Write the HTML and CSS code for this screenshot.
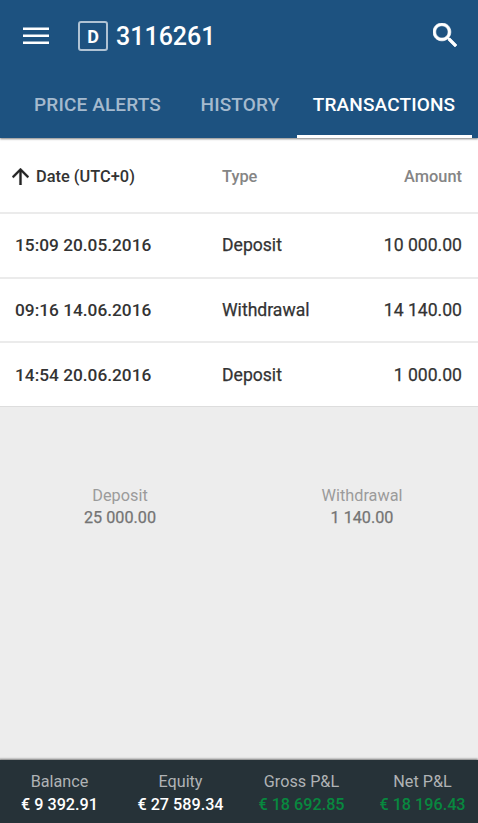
FILE: index.html
```html
<!DOCTYPE html>
<html lang="en">
<head>
<meta charset="utf-8">
<title>Transactions</title>
<link rel="stylesheet" href="styles.css">
</head>
<body>
<div class="app">
  <header class="header">
    <div class="toolbar">
      <svg class="menu" viewBox="0 0 26 18"><path d="M0 .5h26v2.6H0zM0 7.5h26v2.6H0zM0 14.5h26v2.6H0z"/></svg>
      <span class="badge">D</span>
      <h1 class="account">3116261</h1>
      <svg class="search" viewBox="3 3 17.5 17.5"><path d="M15.5 14h-.79l-.28-.27C15.41 12.59 16 11.11 16 9.5 16 5.91 13.09 3 9.5 3S3 5.91 3 9.5 5.91 16 9.5 16c1.61 0 3.09-.59 4.23-1.57l.27.28v.79l5 4.99L20.49 19l-4.99-5zm-6 0C7.01 14 5 11.99 5 9.5S7.01 5 9.5 5 14 7.01 14 9.5 11.99 14 9.5 14z"/></svg>
    </div>
    <nav class="tabs">
      <span class="tab alerts"><span class="label">PRICE ALERTS</span></span>
      <span class="tab history"><span class="label">HISTORY</span></span>
      <span class="tab transactions"><span class="label">TRANSACTIONS</span></span>
    </nav>
  </header>
  <main class="list">
    <div class="row head">
      <span class="date"><svg class="arrow" viewBox="4 4 16 16"><path d="M4 12l1.41 1.41L11 7.83V20h2V7.83l5.58 5.59L20 12l-8-8-8 8z"/></svg><span class="label">Date (UTC+0)</span></span>
      <span class="type"><span class="label">Type</span></span>
      <span class="amount"><span class="label">Amount</span></span>
    </div>
    <div class="row"><span class="date">15:09 20.05.2016</span><span class="type">Deposit</span><span class="amount">10 000.00</span></div>
    <div class="row"><span class="date">09:16 14.06.2016</span><span class="type">Withdrawal</span><span class="amount">14 140.00</span></div>
    <div class="row"><span class="date">14:54 20.06.2016</span><span class="type">Deposit</span><span class="amount">1 000.00</span></div>
  </main>
  <section class="totals">
    <div class="total"><span>Deposit</span><b>25 000.00</b></div>
    <div class="total"><span>Withdrawal</span><b>1 140.00</b></div>
  </section>
  <footer class="footer">
    <div class="stat"><span>Balance</span><b>€ 9 392.91</b></div>
    <div class="stat"><span>Equity</span><b>€ 27 589.34</b></div>
    <div class="stat gain"><span>Gross P&amp;L</span><b>€ 18 692.85</b></div>
    <div class="stat gain"><span>Net P&amp;L</span><b>€ 18 196.43</b></div>
  </footer>
</div>
</body>
</html>
```
FILE: styles.css
```css
* { box-sizing: border-box; }
body { margin: 0; font-family: Roboto, "Liberation Sans", sans-serif; }
.app { height: 823px; display: flex; flex-direction: column; background: #ededed; overflow: hidden; }
.header { height: 138px; flex: none; background: #1d5280; color: #fff; box-shadow: 0 1px 2px rgba(0,0,0,.5); z-index: 1; }
.toolbar { height: 72px; display: flex; align-items: center; padding: 0 21px 0 23px; }
.menu { width: 26px; height: 18px; fill: #fff; }
.badge { width: 30px; height: 30px; margin-left: 29px; border: 2px solid #b0c3d4; border-radius: 3px; display: flex; align-items: center; justify-content: center; font-size: 18px; font-weight: 700; }
.account { margin: 1px auto 0 8px; font-size: 25px; font-weight: 500; line-height: 30px; }
.search { width: 24px; height: 24px; margin-bottom: 2px; fill: #fff; stroke: #fff; stroke-width: .5; }
.tabs { height: 66px; display: flex; padding-left: 17px; font-size: 19px; letter-spacing: .14px; font-weight: 500; color: #a5bace; }
.tab { display: flex; align-items: center; justify-content: center; padding-top: 1px; border-bottom: 3px solid transparent; white-space: nowrap; }
.alerts { width: 161px; }
.history { width: 119px; padding-left: 5px; }
.transactions { width: 175px; padding-right: 1px; color: #fff; border-color: #fff; }
.row { height: 64.6px; display: grid; grid-template-columns: 207px 1fr 110px; align-items: center; padding: 0 16px 0 15px; background: #fff; border-bottom: 2px solid #ebebeb; font-size: 17.3px; font-weight: 500; color: #333; }
.row:last-child { height: 64px; border-bottom-width: 1px; border-color: #ddd; }
.type, .amount { font-weight: 400; font-size: 17.6px; -webkit-text-stroke: .25px currentColor; }
.row.head { height: 76px; padding-top: 3px; color: #858585; }
.head span { font-size: 16.4px; font-weight: 500; -webkit-text-stroke: 0; }
.head .date { color: #333; margin-left: -3px; }
.date { display: flex; align-items: center; white-space: nowrap; }
.arrow { width: 17px; height: 17px; margin-right: 7px; fill: #222; stroke: #222; stroke-width: .3; }
.amount { text-align: right; }
.totals { flex: 1; display: grid; grid-template-columns: 240px 244px; padding-top: 78px; align-content: start; color: #9b9b9b; font-size: 16.3px; }
.total { display: flex; flex-direction: column; align-items: center; line-height: 21.5px; }
.total b { font-size: 16.2px; font-weight: 400; color: #747474; -webkit-text-stroke: .25px currentColor; }
.footer { height: 63px; display: grid; grid-template-columns: repeat(4, 121px); margin-left: -1px; background: #263238; color: #fff; padding-top: 11px; font-size: 16.2px; box-shadow: 0 -1px 2px rgba(0,0,0,.5); }
.stat { display: flex; flex-direction: column; align-items: center; line-height: 22.5px; white-space: nowrap; }
.stat span { color: #b0b3b5; }
.stat b { font-size: 16.2px; font-weight: 500; }
.gain b { color: #08883f; }
```
